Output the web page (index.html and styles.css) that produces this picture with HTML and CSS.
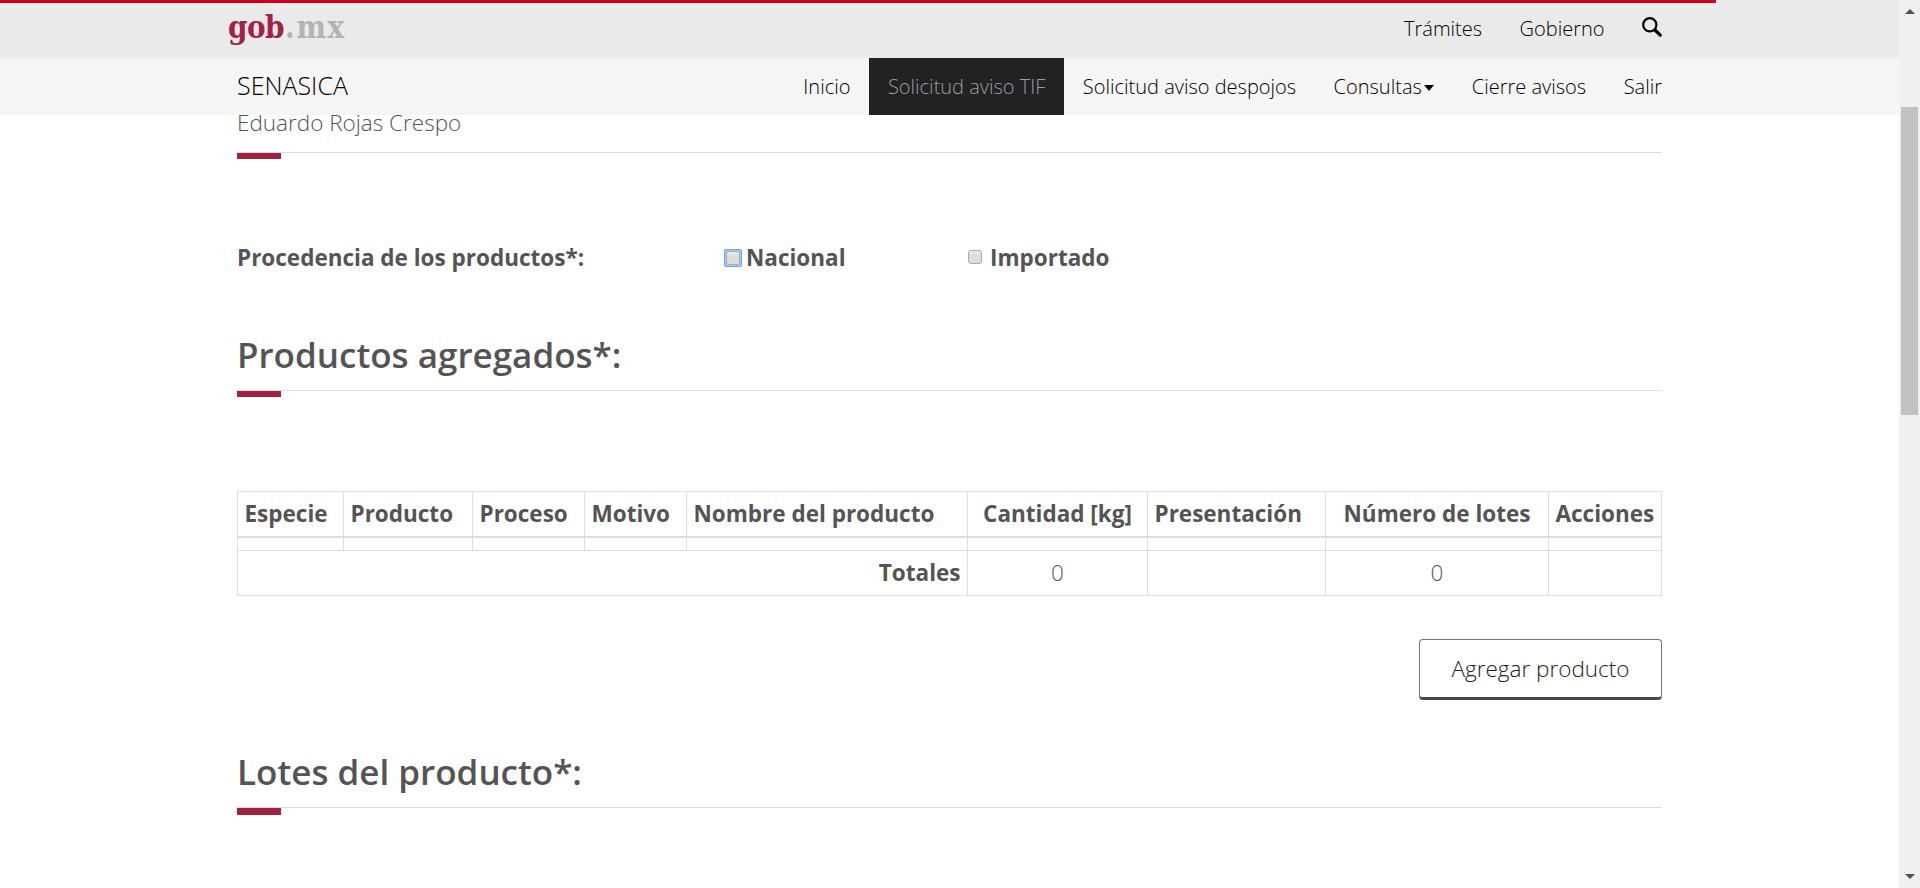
FILE: index.html
```html
<!DOCTYPE html>
<html lang="es">
<head>
<meta charset="utf-8">
<title>SENASICA</title>
<link rel="stylesheet" href="styles.css">
</head>
<body>
<header class="site-header">
  <div class="progress"></div>
  <div class="gov-bar">
    <div class="container bar-row">
      <div class="logo"><span class="logo-gob">gob</span><span class="logo-mx">.mx</span></div>
      <nav class="menu gov-menu">
        <a>Trámites</a>
        <a>Gobierno</a>
        <a class="search"><svg width="20" height="20" viewBox="0 0 20 20"><circle cx="7.8" cy="7.8" r="6.6" fill="none" stroke="#000" stroke-width="2.2"/><path d="M13 13l5.2 5.2" stroke="#000" stroke-width="3.2" fill="none" stroke-linecap="round"/></svg></a>
      </nav>
    </div>
  </div>
  <div class="sub-bar">
    <div class="container bar-row">
      <span class="brand">SENASICA</span>
      <nav class="menu">
        <a>Inicio</a>
        <a class="active">Solicitud aviso TIF</a>
        <a>Solicitud aviso despojos</a>
        <a>Consultas<i class="caret"></i></a>
        <a>Cierre avisos</a>
        <a>Salir</a>
      </nav>
    </div>
  </div>
</header>
<main class="container content">
  <p class="user">Eduardo Rojas Crespo</p>
  <div class="rule"></div>
  <div class="origin">
    <span class="origin-label">Procedencia de los productos*:</span>
    <label class="option national"><span class="focus"><i class="box"></i></span>Nacional</label>
    <label class="option imported"><i class="box"></i>Importado</label>
  </div>
  <h3 class="heading">Productos agregados*:</h3>
  <div class="rule"></div>
  <table class="products">
    <colgroup><col class="c1"><col class="c2"><col class="c3"><col class="c4"><col class="c5"><col class="c6"><col class="c7"><col class="c8"><col class="c9"></colgroup>
    <thead>
      <tr><th>Especie</th><th>Producto</th><th>Proceso</th><th>Motivo</th><th>Nombre del producto</th><th class="mid">Cantidad [kg]</th><th>Presentación</th><th class="mid">Número de lotes</th><th>Acciones</th></tr>
    </thead>
    <tbody>
      <tr class="empty"><td></td><td></td><td></td><td></td><td></td><td></td><td></td><td></td><td></td></tr>
      <tr><th class="total" colspan="5">Totales</th><td class="mid">0</td><td></td><td class="mid">0</td><td></td></tr>
    </tbody>
  </table>
  <div class="actions"><button class="add">Agregar producto</button></div>
  <h3 class="heading lots">Lotes del producto*:</h3>
  <div class="rule tall"></div>
</main>
<div class="scrollbar">
  <i class="arrow up"></i>
  <div class="thumb"></div>
  <i class="arrow down"></i>
</div>
</body>
</html>
```
FILE: styles.css
```css
* { box-sizing: border-box; }
html, body { margin: 0; height: 888px; overflow: hidden; background: #fff; }
body { font: 300 22.5px/32px "Open Sans", sans-serif; color: #545454; }
.container { width: 1425px; margin-left: 237px; }

.site-header { position: fixed; top: 0; left: 0; width: 1899px; z-index: 2; color: #000; }
.progress { position: absolute; top: 0; left: 0; width: 1716px; height: 3px; background: #d0021b; }
.gov-bar { height: 58px; background: #eaeaea; }
.sub-bar { height: 57px; background: #f5f5f5; }
.bar-row { display: flex; justify-content: space-between; height: 100%; }
.logo { display: flex; margin-left: -9px; font: 700 condensed 31px/54px "DejaVu Serif Condensed", "DejaVu Serif", serif; letter-spacing: -0.5px; }
.logo-gob { color: #a32142; }
.logo-mx { color: #b3b3b3; letter-spacing: 1.6px; margin-left: 1px; }
.brand { font-size: 25px; line-height: 55px; }
.menu { display: flex; margin-right: -18.75px; font-size: 20px; line-height: 57px; }
.bar-row .menu { margin-left: auto; }
.menu a { display: flex; align-items: center; padding: 0 18.75px; color: #000; }
.gov-menu a { height: 56px; }
.menu .active { background: #212224; color: #9d9d9d; }
.search svg { display: block; margin-top: -3px; }
.caret { border: 5px solid transparent; border-top: 6px solid #000; border-bottom: 0; margin: 3px 0 0 2.5px; }

.content { padding-top: 107px; }
.user { margin: 0; }
.rule { height: 7px; border-top: 1px solid #ddd; margin-top: 13px; }
.rule::after { content: ""; display: block; width: 44px; height: 6px; background: #a32142; }
.tall { height: 8px; }
.tall::after { height: 7px; }
.origin { display: grid; grid-template-columns: 488px 243px 1fr; margin-top: 83px; font-weight: 700; }
.option { display: flex; align-items: center; }
.box { width: 14px; height: 14px; margin: 0 8px 2px 0; border: 1px solid #a9a9a9; border-radius: 3px; background: linear-gradient(#ececec, #dcdcdc 40%); }
.focus { display: flex; width: 18px; height: 18px; margin: 0 4px 0 -1px; border: 1px solid #6ba3f5; border-radius: 2px; background: #a8c8fa; padding: 1px; }
.focus .box { margin: 0; }
.heading { margin: 62px 0 0; font-size: 35px; line-height: 38px; font-weight: 600; }
.heading + .rule { margin-top: 16px; }

.products { table-layout: fixed; width: 1425px; margin-top: 94px; border-collapse: collapse; }
.products th, .products td { padding: 6px 6.5px; border: 1px solid #ddd; text-align: left; font-weight: 300; height: 45px; }
.products th { font-weight: 700; white-space: nowrap; }
.products thead th { border-bottom-width: 2px; }
.products .empty td { height: 13px; padding: 0; }
.products .mid { text-align: center; }
.products .total { text-align: right; }
.c1 { width: 106px; } .c2 { width: 129px; } .c3 { width: 112px; }
.c4 { width: 102px; } .c5 { width: 281px; } .c6 { width: 180px; }
.c7 { width: 178px; } .c8 { width: 223px; } .c9 { width: 113px; }

.actions { display: flex; justify-content: flex-end; margin-top: 43px; }
.add { width: 243px; height: 61px; padding: 1px 0 0; border: 1px solid #777; border-bottom: 3px solid #4a4a4a; border-radius: 4px; background: #fff; font: inherit; color: #222; }
.lots { margin-top: 53px; }

.scrollbar { position: fixed; top: 0; right: 0; width: 21px; height: 888px; padding: 9px 2px 9px; background: #f0f0f0; display: flex; flex-direction: column; align-items: center; }
.thumb { width: 17px; height: 308px; margin: 93px 0 auto; background: #c1c1c1; }
.arrow { border: 5px solid transparent; }
.up { border-top: 0; border-bottom: 5px solid #505050; }
.down { border-bottom: 0; border-top: 5px solid #505050; }
```
